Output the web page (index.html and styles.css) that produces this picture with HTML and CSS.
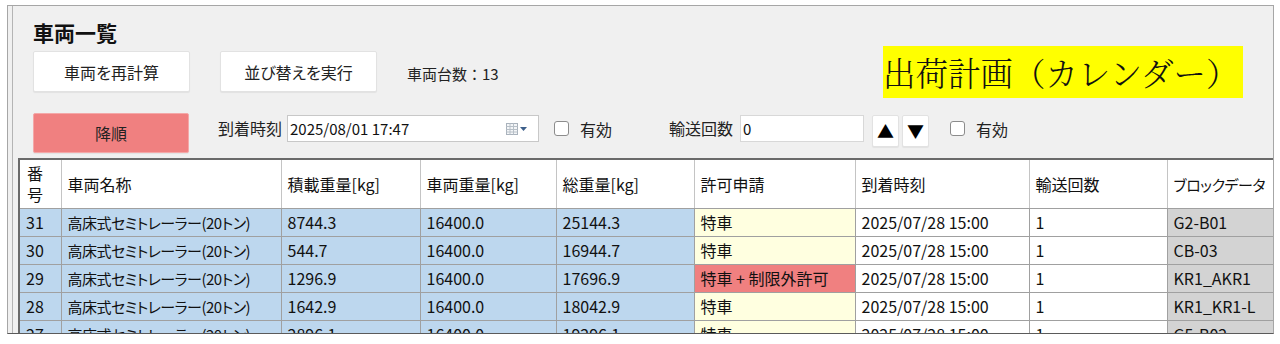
FILE: index.html
```html
<!DOCTYPE html>
<html lang="ja">
<head>
<meta charset="UTF-8">
<title>車両一覧</title>
<link rel="stylesheet" href="styles.css">
</head>
<body>
  <div class="panel">
    <div class="title">車両一覧</div>

    <div class="bar bar-top">
      <button class="btn btn-wide">車両を再計算</button>
      <button class="btn btn-wide gap30">並び替えを実行</button>
      <span class="count">車両台数：13</span>
      <div class="banner">出荷計画（カレンダー）</div>
    </div>

    <div class="bar bar-filter">
      <button class="btn btn-sort">降順</button>
      <span class="label lbl-arrival">到着時刻</span>
      <div class="field field-date">
        <span class="field-text">2025/08/01 17:47</span>
        <svg class="cal" width="22" height="12" viewBox="0 0 22 12">
          <rect x="0.5" y="0.5" width="11" height="11" fill="#f4f6f8" stroke="#a9b2bc"/>
          <path d="M0.5 3.5h11M0.5 6.5h11M0.5 9h11M4 0.5v11M7.5 0.5v11" stroke="#b8c0c8" fill="none"/>
          <path d="M14 4h7l-3.5 4z" fill="#3d5f8a"/>
        </svg>
      </div>
      <label class="check"><span class="box"></span>有効</label>
      <span class="label lbl-trips">輸送回数</span>
      <div class="field field-num"><span class="field-text">0</span></div>
      <button class="btn btn-arrow first">▲</button>
      <button class="btn btn-arrow">▼</button>
      <label class="check check-trips"><span class="box"></span>有効</label>
    </div>

    <table class="grid">
      <colgroup>
        <col style="width:42px"><col style="width:220px"><col style="width:139px">
        <col style="width:136px"><col style="width:138px"><col style="width:161px">
        <col style="width:174px"><col style="width:138px"><col style="width:107px">
      </colgroup>
      <thead>
        <tr>
          <th class="narrow">番号</th><th>車両名称</th><th>積載重量[kg]</th><th>車両重量[kg]</th>
          <th>総重量[kg]</th><th>許可申請</th><th>到着時刻</th><th>輸送回数</th><th class="kana">ブロックデータ</th>
        </tr>
      </thead>
      <tbody>
        <tr>
          <td class="blue">31</td><td class="blue name">高床式セミトレーラー(20トン)</td><td class="blue">8744.3</td>
          <td class="blue">16400.0</td><td class="blue">25144.3</td><td class="yellow">特車</td>
          <td>2025/07/28 15:00</td><td>1</td><td class="gray">G2-B01</td>
        </tr>
        <tr>
          <td class="blue">30</td><td class="blue name">高床式セミトレーラー(20トン)</td><td class="blue">544.7</td>
          <td class="blue">16400.0</td><td class="blue">16944.7</td><td class="yellow">特車</td>
          <td>2025/07/28 15:00</td><td>1</td><td class="gray">CB-03</td>
        </tr>
        <tr>
          <td class="blue">29</td><td class="blue name">高床式セミトレーラー(20トン)</td><td class="blue">1296.9</td>
          <td class="blue">16400.0</td><td class="blue">17696.9</td><td class="red">特車 + 制限外許可</td>
          <td>2025/07/28 15:00</td><td>1</td><td class="gray">KR1_AKR1</td>
        </tr>
        <tr>
          <td class="blue">28</td><td class="blue name">高床式セミトレーラー(20トン)</td><td class="blue">1642.9</td>
          <td class="blue">16400.0</td><td class="blue">18042.9</td><td class="yellow">特車</td>
          <td>2025/07/28 15:00</td><td>1</td><td class="gray">KR1_KR1-L</td>
        </tr>
        <tr>
          <td class="blue">27</td><td class="blue name">高床式セミトレーラー(20トン)</td><td class="blue">2896.1</td>
          <td class="blue">16400.0</td><td class="blue">19296.1</td><td class="yellow">特車</td>
          <td>2025/07/28 15:00</td><td>1</td><td class="gray">G5-B02</td>
        </tr>
      </tbody>
    </table>
  </div>
</body>
</html>
```

FILE: styles.css
```css
  html, body {
    margin: 0;
    background: #ffffff;
  }

  body {
    font-family: "Noto Sans CJK JP", "Noto Sans", sans-serif;
    color: #1a1a1a;
  }

  .panel {
    margin: 5px 0 0 7px;
    width: 1265px;
    height: 327px;
    border: 1px solid #a6a6a6;
    border-bottom-color: #5a5a5a;
    background: #f0f0f0;
    box-shadow: inset 4px 0 0 #f0f0f0, inset 5px 0 0 #b4b4b4;
    overflow: hidden;
  }

  .title {
    padding: 13px 0 0 25px;
    height: 27px;
    line-height: 27px;
    font-size: 21px;
    font-weight: bold;
    color: #111;
  }

  .bar {
    display: flex;
    padding-left: 25px;
  }

  .bar-top {
    align-items: center;
    height: 52px;
    padding-right: 30px;
  }

  .bar-filter {
    align-items: flex-start;
    margin-top: 15px;
    height: 40px;
  }

  .btn {
    font-family: inherit;
    background: #ffffff;
    border: 1px solid #e2e2e2;
    border-radius: 2px;
    box-shadow: 0 1px 1px rgba(0, 0, 0, 0.06);
    color: #222;
    padding: 0;
    cursor: pointer;
  }

  .btn-wide {
    width: 157px;
    height: 41px;
    font-size: 16px;
    font-feature-settings: "palt";
    margin-top: -1px;
  }

  .gap30 {
    margin-left: 30px;
  }

  .count {
    margin-left: 30px;
    font-size: 15px;
    color: #222;
    padding-top: 2px;
  }

  .banner {
    margin-left: auto;
    width: 360px;
    height: 52px;
    background: #ffff00;
    font-family: "Noto Serif CJK JP", "Liberation Serif", serif;
    font-size: 32.5px;
    font-weight: 300;
    line-height: 52px;
    color: #111;
    white-space: nowrap;
  }

  .btn-sort {
    width: 156px;
    height: 40px;
    font-size: 16px;
    background: #f08080;
    border-color: #f4a8a8;
  }

  .label {
    font-size: 16px;
    line-height: 27px;
    margin-top: 2px;
    color: #222;
  }

  .lbl-arrival {
    margin-left: 29px;
  }

  .lbl-trips {
    margin-left: 57px;
  }

  .field {
    display: flex;
    align-items: center;
    height: 25px;
    margin-top: 2px;
    background: #ffffff;
    border: 1px solid #c8c8c8;
  }

  .field-text {
    padding-left: 2px;
    font-size: 15px;
    color: #111;
  }

  .field-date {
    width: 250px;
    margin-left: 5px;
  }

  .cal {
    margin-left: auto;
    margin-right: 10px;
  }

  .field-num {
    width: 122px;
    margin-left: 7px;
    border-color: #d8d8d8;
  }

  .check {
    display: flex;
    align-items: center;
    height: 27px;
    margin-top: 2px;
    margin-left: 15px;
    font-size: 16px;
    color: #222;
  }

  .check-trips {
    margin-left: 21px;
  }

  .box {
    width: 13px;
    height: 13px;
    margin-right: 11px;
    background: #fff;
    border: 1px solid #8c8c8c;
    border-radius: 3px;
  }

  .btn-arrow {
    width: 27px;
    height: 32px;
    margin-left: 3px;
    margin-top: 2px;
    font-size: 17px;
    color: #000;
    line-height: 30px;
  }

  .btn-arrow.first {
    margin-left: 8px;
  }

  .grid {
    margin: 5px 0 0 10px;
    width: 1256px;
    border-collapse: collapse;
    table-layout: fixed;
    font-size: 16px;
    color: #111;
    border-top: 2px solid #6a6a6a;
    border-left: 2px solid #6a6a6a;
  }

  .grid th,
  .grid td {
    border: 1px solid #a0a0a0;
    padding: 0 6px;
    text-align: left;
    white-space: nowrap;
    overflow: hidden;
  }

  .grid th {
    height: 48px;
    background: #ffffff;
    font-weight: normal;
    border-color: #c4c4c4;
    border-bottom-color: #a0a0a0;
  }

  .grid th.narrow {
    white-space: normal;
    line-height: 21px;
    padding: 0 7px;
  }

  .grid th.kana,
  .grid td.name {
    font-size: 15px;
    font-feature-settings: "palt";
    letter-spacing: -0.5px;
  }

  .grid td {
    height: 27px;
    line-height: 27px;
    background: #ffffff;
  }

  .grid td.blue {
    background: #bdd7ee;
  }

  .grid td.yellow {
    background: #ffffe0;
  }

  .grid td.red {
    background: #f08080;
  }

  .grid td.gray {
    background: #d3d3d3;
  }
```
